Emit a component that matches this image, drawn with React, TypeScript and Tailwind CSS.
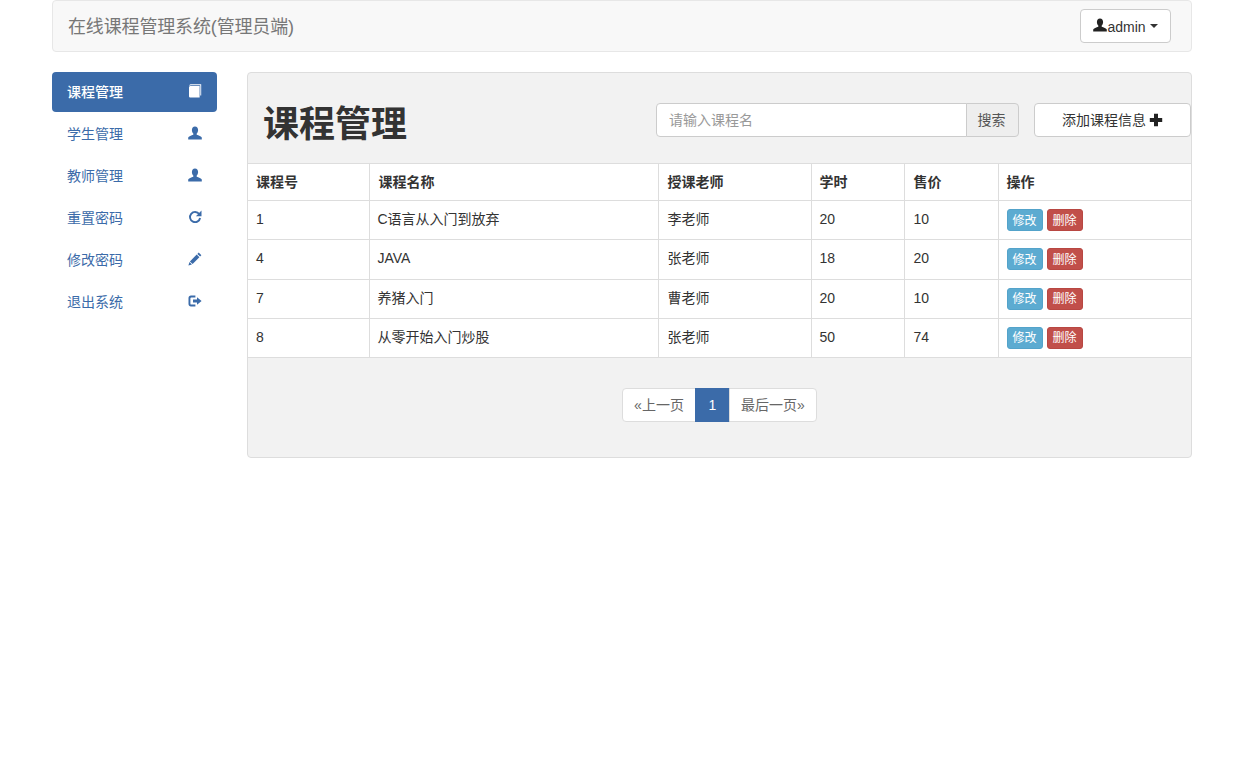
const cjk = "font-['Liberation_Sans','Noto_Sans_CJK_SC',sans-serif]";

function Book({ className = "" }: { className?: string }) {
  return (
    <svg viewBox="0 0 14 14" className={className} fill="currentColor">
      <path d="M2.6 0.3H13.2V11.6H12.3V1.2H3C2.2 1.2 1.6 1.5 1.3 2C1.4 1 1.8 0.3 2.6 0.3Z" />
      <path d="M2.6 1.9H11.6V13.6H2.6C1.6 13.6 1 13 1 12.2V3.2C1 2.5 1.7 1.9 2.6 1.9Z" />
    </svg>
  );
}
function User({ className = "" }: { className?: string }) {
  return (
    <svg viewBox="0 0 14 14" className={className} fill="currentColor">
      <path d="M7 0.4C9 0.4 10.1 2 10.1 4C10.1 5.4 9.5 6.8 8.7 7.6V8.7C10.6 9.5 13.4 10.2 13.8 11.6V13.4H0.2V11.6C0.6 10.2 3.4 9.5 5.3 8.7V7.6C4.5 6.8 3.9 5.4 3.9 4C3.9 2 5 0.4 7 0.4Z" />
    </svg>
  );
}
function Refresh({ className = "" }: { className?: string }) {
  return (
    <svg viewBox="0 0 14 14" className={className} fill="none">
      <path d="M11.2 4A5.1 5.1 0 1 0 12.1 8" stroke="currentColor" strokeWidth="1.9" />
      <path d="M13.5 0.6V6.2H7.9Z" fill="currentColor" />
    </svg>
  );
}
function Pencil({ className = "" }: { className?: string }) {
  return (
    <svg viewBox="0 0 14 14" className={className} fill="currentColor">
      <path d="M10.7 0.6L13.4 3.3L12.1 4.6L9.4 1.9Z" />
      <path d="M8.7 2.6L11.4 5.3L4.6 12.1L1.9 9.4Z" />
      <path d="M1.5 10.1L3.9 12.5L0.4 13.6Z" />
    </svg>
  );
}
function Logout({ className = "" }: { className?: string }) {
  return (
    <svg viewBox="0 0 14 14" className={className} fill="currentColor">
      <path d="M3 1.5H7.4V3.4H3.4C2.8 3.4 2.4 3.8 2.4 4.3V9.7C2.4 10.2 2.8 10.6 3.4 10.6H7.4V12.5H3C1.5 12.5 0.5 11.5 0.5 10.1V3.9C0.5 2.5 1.5 1.5 3 1.5Z" />
      <path d="M9 3.2L13.6 7L9 10.8V8.5H5V5.5H9Z" />
    </svg>
  );
}
function Plus({ className = "" }: { className?: string }) {
  return (
    <svg viewBox="0 0 14 14" className={className} fill="currentColor">
      <path d="M5 0.8H9V5H13.2V9H9V13.2H5V9H0.8V5H5Z" />
    </svg>
  );
}

const nav = [
  { label: "课程管理", Icon: Book, active: true },
  { label: "学生管理", Icon: User },
  { label: "教师管理", Icon: User },
  { label: "重置密码", Icon: Refresh },
  { label: "修改密码", Icon: Pencil },
  { label: "退出系统", Icon: Logout },
];

const rows = [
  ["1", "C语言从入门到放弃", "李老师", "20", "10"],
  ["4", "JAVA", "张老师", "18", "20"],
  ["7", "养猪入门", "曹老师", "20", "10"],
  ["8", "从零开始入门炒股", "张老师", "50", "74"],
];
const heads = ["课程号", "课程名称", "授课老师", "学时", "售价", "操作"];
const headCell = [
  "pl-2",
  "pl-[9px] border-l border-[#ddd]",
  "pl-[9px] border-l border-[#ddd]",
  "pl-2 border-l border-[#ddd]",
  "pl-[9px] border-l border-[#ddd]",
  "pl-2 border-l border-[#ddd]",
];
const bodyCell = [
  "pl-2",
  "pl-2 border-l border-[#ddd]",
  "pl-[9px] border-l border-[#ddd]",
  "pl-2 border-l border-[#ddd]",
  "pl-[9px] border-l border-[#ddd]",
];

export default function App() {
  return (
    <div className={`w-[1140px] mx-auto text-sm text-[#333] ${cjk}`}>
      <header className="h-[52px] mb-5 flex items-center justify-between bg-[#f8f8f8] border border-[#e7e7e7] rounded pl-[15px] pr-[20px]">
        <span className="text-[18px] text-[#777] pt-1 tracking-[-0.15px]">在线课程管理系统(管理员端)</span>
        <button className="w-[91px] h-[34px] flex items-center justify-center bg-white border border-[#ccc] rounded text-[#333]">
          <User className="w-[14px] h-[14px] text-[#222] -mt-[2px]" />
          <span className="pt-px">admin</span>
          <span className="ml-[4px] w-0 h-0 border-x-[4px] border-x-transparent border-t-[4px] border-t-[#333]" />
        </button>
      </header>

      <div className="flex gap-[30px] items-start">
        <nav className="w-[165px] flex flex-col gap-[2px]">
          {nav.map(({ label, Icon, active }) => (
            <a
              key={label}
              className={`h-10 pl-[15px] pr-[15px] flex items-center justify-between rounded ${
                active ? "bg-[#3b6ba9] text-white font-medium" : "text-[#3b6ba9]"
              }`}
            >
              <span>{label}</span>
              <Icon className="w-[14px] h-[14px] -mt-[3px]" />
            </a>
          ))}
        </nav>

        <main className="w-[945px] h-[386px] bg-[#f2f2f2] border border-[#ddd] rounded">
          <div className="h-[90px] flex items-center pl-[16px]">
            <h1 className="text-[36px] font-bold text-[#333] flex-1 mt-[14px] -ml-px leading-[40px]">课程管理</h1>
            <div className="flex items-center mt-[3px]">
              <input
                readOnly
                placeholder="请输入课程名"
                className={`w-[311px] h-[34px] px-3 bg-white border border-[#ccc] rounded-l placeholder:text-[#999] outline-none ${cjk}`}
              />
              <button className="w-[53px] h-[34px] -ml-px pr-[2px] bg-[#eee] border border-[#ccc] rounded-r text-[#555]">搜索</button>
              <button className="w-[157px] h-[34px] ml-[15px] flex items-center justify-center gap-[3px] bg-white border border-[#ccc] rounded text-[#333]">
                添加课程信息
                <Plus className="w-[14px] h-[14px] text-[#222]" />
              </button>
            </div>
          </div>

          <table className="w-[943px] table-fixed border-collapse bg-white text-[#333]">
            <colgroup>
              <col className="w-[121px]" />
              <col className="w-[289px]" />
              <col className="w-[153px]" />
              <col className="w-[93px]" />
              <col className="w-[94px]" />
              <col className="w-[193px]" />
            </colgroup>
            <thead>
              <tr className="h-[37px] border-y border-[#ddd]">
                {heads.map((h, i) => (
                  <th key={h} className={`pr-2 pb-[1px] text-left font-bold ${headCell[i]}`}>
                    {h}
                  </th>
                ))}
              </tr>
            </thead>
            <tbody>
              {rows.map((r) => (
                <tr key={r[0]} className="h-[39.25px] border-b border-[#ddd]">
                  {r.map((c, i) => (
                    <td key={i} className={`pr-2 pb-[2px] ${bodyCell[i]}`}>
                      {c}
                    </td>
                  ))}
                  <td className="px-2 border-l border-[#ddd]">
                    <div className="flex gap-1">
                      <button className="w-9 h-[22px] pt-px text-xs text-white bg-[#5cabd1] border border-[#53a3ca] rounded-[3px]">修改</button>
                      <button className="w-9 h-[22px] pt-px text-xs text-white bg-[#c14f4a] border border-[#b84742] rounded-[3px]">删除</button>
                    </div>
                  </td>
                </tr>
              ))}
            </tbody>
          </table>

          <div className="flex justify-center pt-[30px]">
            <div className="flex h-[34px] text-[#666]">
              <a className="w-[74px] flex items-center justify-center bg-white border border-[#ddd] rounded-l">«上一页</a>
              <a className="w-[35px] -ml-px flex items-center justify-center bg-[#3b6ba9] border border-[#3b6ba9] text-white">1</a>
              <a className="w-[88px] -ml-px flex items-center justify-center bg-white border border-[#ddd] rounded-r">最后一页»</a>
            </div>
          </div>
        </main>
      </div>
    </div>
  );
}
